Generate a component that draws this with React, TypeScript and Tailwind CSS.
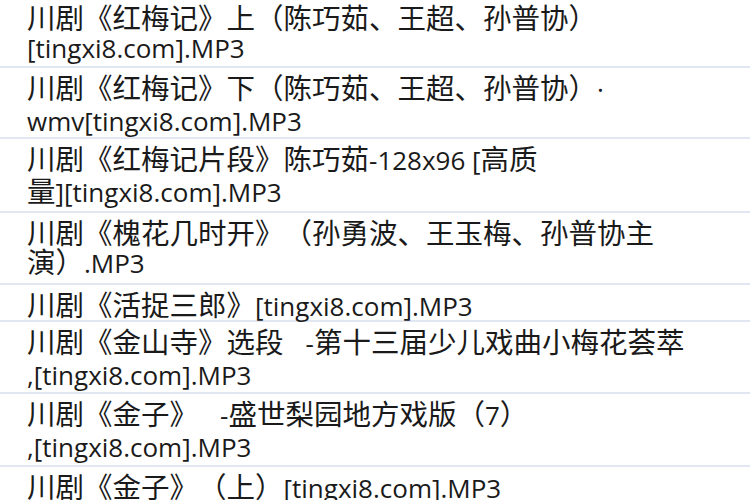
type Row = {
  lines: string[];
  h: string;
};

// "^" marks a wider gap that the source listing has before the dash
const rows: Row[] = [
  { lines: ['川剧《红梅记》上（陈巧茹、王超、孙普协）', '[tingxi8.com].MP3'], h: 'h-[68px] pt-[2px]' },
  { lines: ['川剧《红梅记》下（陈巧茹、王超、孙普协）·', 'wmv[tingxi8.com].MP3'], h: 'h-[71px] pt-[4px]' },
  { lines: ['川剧《红梅记片段》陈巧茹-128x96 [高质', '量][tingxi8.com].MP3'], h: 'h-[74px] pt-[4px]' },
  { lines: ['川剧《槐花几时开》（孙勇波、王玉梅、孙普协主', '演）.MP3'], h: 'h-[72px] pt-[4px]' },
  { lines: ['川剧《活捉三郎》[tingxi8.com].MP3'], h: 'h-[37px] pt-[4px]' },
  { lines: ['川剧《金山寺》选段^-第十三届少儿戏曲小梅花荟萃', ',[tingxi8.com].MP3'], h: 'h-[72px] pt-[4px]' },
  { lines: ['川剧《金子》^-盛世梨园地方戏版（7）', ',[tingxi8.com].MP3'], h: 'h-[73px] pt-[4px]' },
  { lines: ['川剧《金子》（上）[tingxi8.com].MP3'], h: 'h-[37px] pt-[4px]' },
];

const CJK = /([\u3000-\u303f\u4e00-\u9fff\uff00-\uffef]+)/;

function Line({ text }: { text: string }) {
  const parts = text.split(CJK).filter(Boolean);
  return (
    <div className="whitespace-pre">
      {parts.map((p, i) =>
        CJK.test(p) ? (
          <span key={i}>{p}</span>
        ) : (
          <span key={i} className="font-['Open_Sans',sans-serif] text-[26px]">
            {p.split('^').map((seg, k) => (
              <span key={k}>
                {k > 0 && <span className="inline-block w-[22px]" />}
                {seg}
              </span>
            ))}
          </span>
        ),
      )}
    </div>
  );
}

export default function App() {
  return (
    <div className="h-[500px] w-[750px] overflow-hidden bg-white font-['Noto_Sans_CJK_SC',sans-serif] text-[28.5px] leading-[29px] text-[#1a1a1a] [text-spacing-trim:space-all]">
      {rows.map((row, i) => (
        <div key={i} className={`border-b-2 border-[#e1e6f3] pl-[27px] ${row.h}`}>
          {row.lines.map((line, j) => (
            <Line key={j} text={line} />
          ))}
        </div>
      ))}
    </div>
  );
}
